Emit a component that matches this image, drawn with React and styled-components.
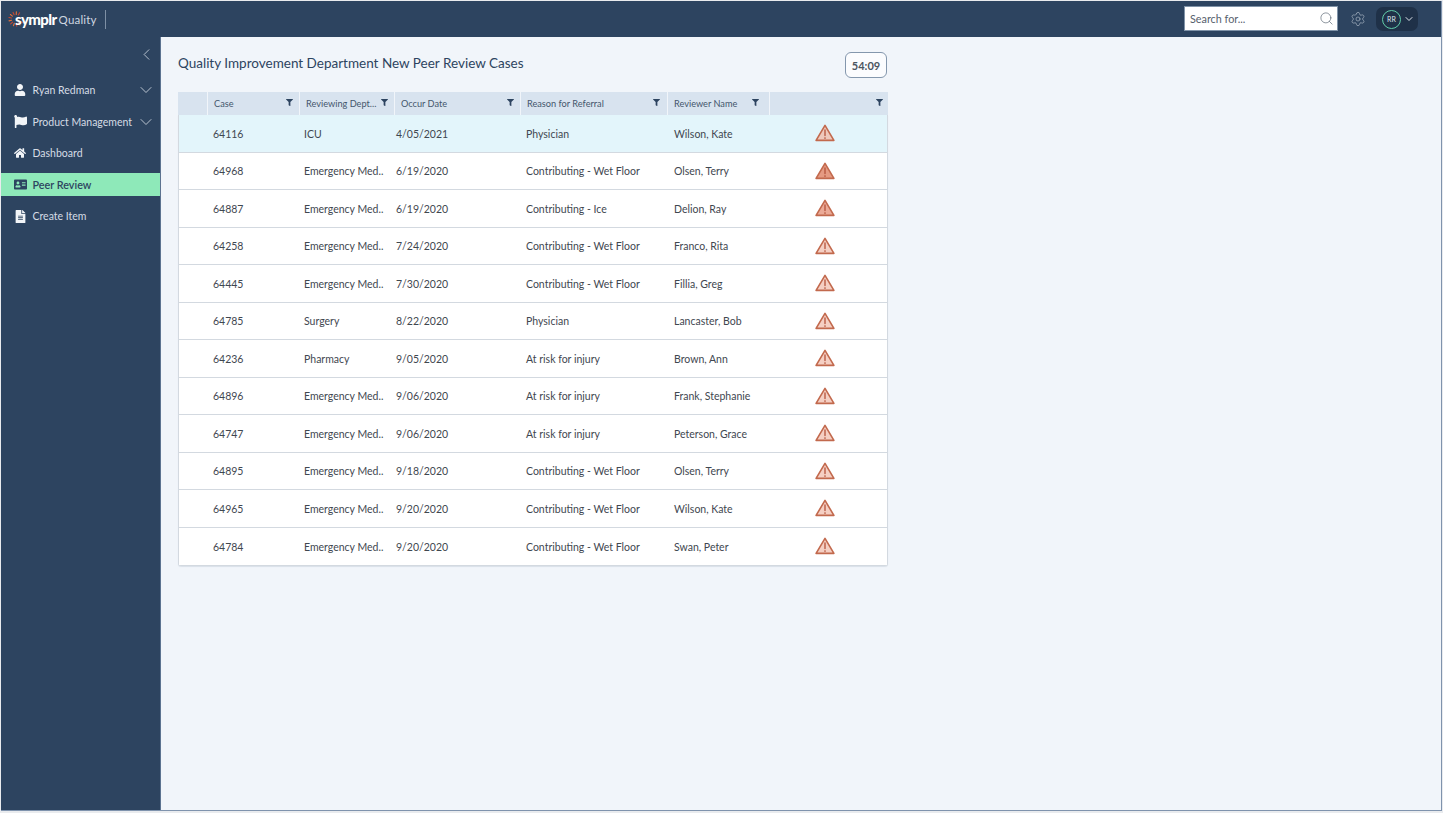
import React from "react";
import styled, { createGlobalStyle } from "styled-components";
import { FaUser, FaFlag, FaHome, FaAddressCard, FaFileAlt, FaFilter } from "react-icons/fa";
import { ChevronDown, ChevronLeft, Search, Settings } from "lucide-react";

const GlobalStyle = createGlobalStyle`
  html, body {
    margin: 0;
    height: 100%;
    background: #e9ebee;
    font-family: "Lato", sans-serif;
    overflow: hidden;
  }
  * { box-sizing: border-box; }
`;

const Frame = styled.div`
  margin: 1px 0 0 1px;
  width: 1441px;
  height: 810px;
  display: flex;
  flex-direction: column;
  border-right: 1px solid #7f93ad;
  border-bottom: 1px solid #7f93ad;
  background: #f1f5fa;
`;

const TopBar = styled.header`
  height: 36px;
  flex: none;
  background: #2d4460;
  display: flex;
  align-items: center;
  justify-content: space-between;
  padding: 0 23px 0 7px;
`;

const Brand = styled.div`
  display: flex;
  align-items: center;
  height: 19px;
  padding-right: 8px;
  border-right: 1px solid #7e90a5;
`;

const BrandName = styled.span`
  color: #fff;
  font-size: 15px;
  font-weight: 900;
  letter-spacing: -0.6px;
  margin-left: -9px;
`;

const BrandProduct = styled.span`
  color: #cfd7e0;
  font-size: 11.5px;
  margin-left: 2px;
  letter-spacing: 0.2px;
`;

const TopActions = styled.div`
  display: flex;
  align-items: center;
`;

const SearchBox = styled.div`
  width: 154px;
  height: 25px;
  background: #fff;
  border: 1px solid #8093a8;
  display: flex;
  align-items: center;
  justify-content: space-between;
  padding: 0 3px 1px 5px;
  font-size: 10.8px;
  color: #56606c;
  margin: 0 12px 1px 0;
`;

const GearWrap = styled.span`
  display: flex;
  color: #aab6c4;
  margin-right: 10px;
`;

const AvatarPill = styled.div`
  width: 42px;
  height: 24px;
  background: #1f3148;
  border-radius: 7px;
  display: flex;
  align-items: center;
  padding-left: 6px;
  gap: 2px;
  color: #dfe5ec;
`;

const AvatarCircle = styled.div`
  width: 19px;
  height: 19px;
  border: 1px solid #62cdaa;
  border-radius: 50%;
  display: flex;
  align-items: center;
  justify-content: center;
  font-size: 7px;
  color: #dfe5ec;
`;

const Body = styled.div`
  flex: 1;
  display: flex;
  min-height: 0;
`;

const Sidebar = styled.nav`
  width: 160px;
  flex: none;
  background: #2d4460;
  border-right: 1px solid #5c7390;
  display: flex;
  flex-direction: column;
`;

const CollapseRow = styled.div`
  height: 41.5px;
  display: flex;
  justify-content: flex-end;
  align-items: flex-start;
  padding: 8px 4px 0 0;
  color: #c8d1dc;
`;

const NavList = styled.div`
  display: flex;
  flex-direction: column;
  gap: 8.5px;
`;

const NavItem = styled.div`
  height: 23px;
  display: flex;
  align-items: center;
  padding: 0 4px 0 13px;
  font-size: ${(p) => (p.$active ? "10.8px" : "10.5px")};
  color: ${(p) => (p.$active ? "#2d4460" : "#d5dce5")};
  background: ${(p) => (p.$active ? "#8ee9b9" : "transparent")};
  font-weight: ${(p) => (p.$active ? 600 : 400)};
`;

const NavIcon = styled.span`
  width: 18.5px;
  flex: none;
  display: flex;
  font-size: ${(p) => p.$size}px;
  color: ${(p) => (p.$active ? "#2d4460" : "#f2f5f8")};
`;

const NavLabel = styled.span`
  flex: 1;
  white-space: nowrap;
`;

const NavChevron = styled(ChevronDown)`
  color: #c5ced9;
  flex: none;
`;

const Main = styled.main`
  flex: 1;
  padding: 15px 0 0 17px;
`;

const Panel = styled.section`
  width: 710px;
`;

const TitleRow = styled.div`
  display: flex;
  align-items: center;
  justify-content: space-between;
  height: 26px;
  margin-bottom: 14px;
  padding-right: 1px;
`;

const Title = styled.h1`
  margin: 0 0 5px;
  font-size: 13.5px;
  font-weight: 400;
  color: #2d4460;
`;

const Timer = styled.div`
  width: 42px;
  height: 26px;
  border: 1px solid #8497ad;
  border-radius: 6px;
  background: #fbfcfe;
  display: flex;
  align-items: center;
  justify-content: center;
  font-size: 11px;
  font-weight: 700;
  color: #4b5560;
`;

const HeaderRow = styled.div`
  display: grid;
  grid-template-columns: 30px 92px 95px 126px 147px 102px 118px;
  height: 23px;
`;

const HeaderCell = styled.div`
  display: flex;
  align-items: center;
  justify-content: space-between;
  background: #d8e3ef;
  margin-right: ${(p) => (p.$last ? 0 : "1.5px")};
  padding: 0 ${(p) => p.$inset}px 0 6px;
  font-size: 9.2px;
  color: #44566c;
  white-space: nowrap;
`;

const FilterIcon = styled(FaFilter)`
  font-size: 7px;
  color: #2d4460;
  margin-top: -2px;
  flex: none;
`;

const TableBody = styled.div`
  border: 1px solid #d3d9e0;
  border-top: 0;
  border-radius: 0 0 3px 3px;
  background: #fff;
  box-shadow: 0 1px 1px rgba(90, 110, 135, 0.15);
`;

const Row = styled.div`
  display: grid;
  grid-template-columns: 34px 91px 92px 130px 148px 89px 1fr;
  align-items: center;
  height: 37.5px;
  padding-top: 0.6px;
  background: ${(p) => (p.$selected ? "#e3f5fb" : "#fff")};
  border-bottom: 1px solid #d3d9e0;
  font-size: 10.5px;
  color: #3f4750;
  white-space: nowrap;

  &:last-child {
    border-bottom: 0;
  }
`;

const AlertCell = styled.div`
  display: flex;
  justify-content: center;
  margin-top: -0.6px;
`;

const navItems = [
  { label: "Ryan Redman", icon: <FaUser />, size: 12, expandable: true },
  { label: "Product Management", icon: <FaFlag />, size: 13, expandable: true },
  { label: "Dashboard", icon: <FaHome />, size: 12 },
  { label: "Peer Review", icon: <FaAddressCard />, size: 13, active: true },
  { label: "Create Item", icon: <FaFileAlt />, size: 13 },
];

const headers = [
  { label: "", inset: 5 },
  { label: "Case", inset: 6 },
  { label: "Reviewing Dept...", inset: 6 },
  { label: "Occur Date", inset: 6 },
  { label: "Reason for Referral", inset: 7 },
  { label: "Reviewer Name", inset: 10 },
  { label: "", inset: 5 },
];

const cases = [
  ["64116", "ICU", "4/05/2021", "Physician", "Wilson, Kate"],
  ["64968", "Emergency Med..", "6/19/2020", "Contributing - Wet Floor", "Olsen, Terry"],
  ["64887", "Emergency Med..", "6/19/2020", "Contributing - Ice", "Delion, Ray"],
  ["64258", "Emergency Med..", "7/24/2020", "Contributing - Wet Floor", "Franco, Rita"],
  ["64445", "Emergency Med..", "7/30/2020", "Contributing - Wet Floor", "Fillia, Greg"],
  ["64785", "Surgery", "8/22/2020", "Physician", "Lancaster, Bob"],
  ["64236", "Pharmacy", "9/05/2020", "At risk for injury", "Brown, Ann"],
  ["64896", "Emergency Med..", "9/06/2020", "At risk for injury", "Frank, Stephanie"],
  ["64747", "Emergency Med..", "9/06/2020", "At risk for injury", "Peterson, Grace"],
  ["64895", "Emergency Med..", "9/18/2020", "Contributing - Wet Floor", "Olsen, Terry"],
  ["64965", "Emergency Med..", "9/20/2020", "Contributing - Wet Floor", "Wilson, Kate"],
  ["64784", "Emergency Med..", "9/20/2020", "Contributing - Wet Floor", "Swan, Peter"],
];

// dashes run round the left side of the mark, the wordmark covers the rest
const Sunburst = () => (
  <svg width="16" height="16" viewBox="0 0 16 16" fill="none" strokeWidth="1.1" strokeLinecap="round">
    {Array.from({ length: 11 }).map((_, i) => {
      const a = ((i * 27 + 60) * Math.PI) / 180;
      return (
        <line
          key={i}
          stroke={i % 2 ? "#e0703a" : "#c9452f"}
          x1={8 + Math.cos(a) * 4.6}
          y1={8 - Math.sin(a) * 4.6}
          x2={8 + Math.cos(a) * 7.2}
          y2={8 - Math.sin(a) * 7.2}
        />
      );
    })}
  </svg>
);

const AlertIcon = ({ fill }) => (
  <svg width="20" height="18" viewBox="0 0 20 18">
    <path
      d="M10 1.4 L18.9 16.4 H1.1 Z"
      fill={fill}
      stroke="#c2694d"
      strokeWidth="1.6"
      strokeLinejoin="round"
    />
    <path d="M10 6 V11.5" stroke="#b4523a" strokeWidth="1.3" strokeLinecap="round" />
    <circle cx="10" cy="14" r="0.85" fill="#b4523a" />
  </svg>
);

const alertFill = (i) => {
  if (i === 0) return "#eec9bc";
  if (i === 1) return "#e59a82";
  if (i === 2) return "#ebaa97";
  return "#f5cfc3";
};

export default function App() {
  return (
    <>
      <GlobalStyle />
      <Frame>
        <TopBar>
          <Brand>
            <Sunburst />
            <BrandName>symplr</BrandName>
            <BrandProduct>Quality</BrandProduct>
          </Brand>
          <TopActions>
            <SearchBox>
              Search for...
              <Search size={15} strokeWidth={1} color="#4d5a68" />
            </SearchBox>
            <GearWrap>
              <Settings size={16} strokeWidth={1} />
            </GearWrap>
            <AvatarPill>
              <AvatarCircle>RR</AvatarCircle>
              <ChevronDown size={12} strokeWidth={2} />
            </AvatarPill>
          </TopActions>
        </TopBar>
        <Body>
          <Sidebar>
            <CollapseRow>
              <ChevronLeft size={19} strokeWidth={1.1} />
            </CollapseRow>
            <NavList>
              {navItems.map((item) => (
                <NavItem key={item.label} $active={item.active}>
                  <NavIcon $active={item.active} $size={item.size}>{item.icon}</NavIcon>
                  <NavLabel>{item.label}</NavLabel>
                  {item.expandable && <NavChevron size={20} strokeWidth={1.1} />}
                </NavItem>
              ))}
            </NavList>
          </Sidebar>
          <Main>
            <Panel>
              <TitleRow>
                <Title>Quality Improvement Department New Peer Review Cases</Title>
                <Timer>54:09</Timer>
              </TitleRow>
              <HeaderRow>
                {headers.map((h, i) =>
                  i === 0 ? (
                    <HeaderCell key={i} $inset={h.inset} />
                  ) : (
                    <HeaderCell key={i} $inset={h.inset} $last={i === headers.length - 1}>
                      <span>{h.label}</span>
                      <FilterIcon />
                    </HeaderCell>
                  )
                )}
              </HeaderRow>
              <TableBody>
                {cases.map((row, i) => (
                  <Row key={row[0]} $selected={i === 0}>
                    <span />
                    {row.map((value, j) => (
                      <span key={j}>{value}</span>
                    ))}
                    <AlertCell>
                      <AlertIcon fill={alertFill(i)} />
                    </AlertCell>
                  </Row>
                ))}
              </TableBody>
            </Panel>
          </Main>
        </Body>
      </Frame>
    </>
  );
}
